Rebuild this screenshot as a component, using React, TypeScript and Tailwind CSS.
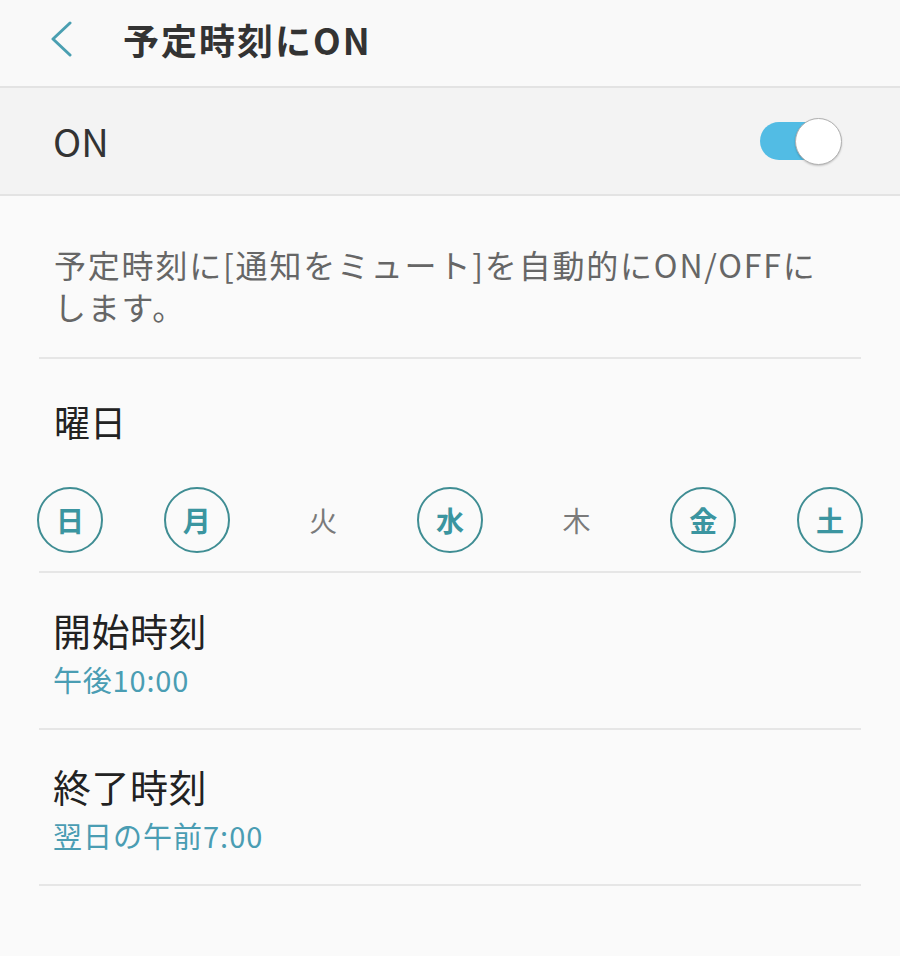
import React from "react";

const font = { fontFamily: '"Noto Sans CJK JP", "Noto Sans", sans-serif' };

const days = [
  { c: "日", on: true },
  { c: "月", on: true },
  { c: "火", on: false },
  { c: "水", on: true },
  { c: "木", on: false },
  { c: "金", on: true },
  { c: "土", on: true },
];

export default function App() {
  return (
    <div className="w-[900px] h-[956px] bg-[#fafafa] overflow-hidden" style={font}>
      {/* Header */}
      <div className="h-[88px] flex items-center bg-[#f9f9f9] border-b-[2px] border-[#e3e3e3]">
        <div className="w-[123px] flex items-center pl-[49px] -mt-[8px]">
          <svg width="24" height="36" viewBox="0 0 24 36" fill="none">
            <path d="M21 2 L4 18 L21 34" stroke="#4a9fb1" strokeWidth="3" strokeLinecap="round" strokeLinejoin="round" />
          </svg>
        </div>
        <div className="text-[36px] leading-[44px] font-bold text-[#333333] tracking-[2px] -mt-[8px]">予定時刻にON</div>
      </div>

      {/* ON row */}
      <div className="h-[108px] flex items-center justify-between bg-[#f3f3f3] border-b-[2px] border-[#e3e3e3] pl-[53px] pr-[58px]">
        <div className="text-[38px] leading-[44px] text-[#333333]">ON</div>
        <div className="relative w-[82px] h-[48px] flex items-center">
          <div className="absolute left-0 w-[64px] h-[38px] rounded-full bg-[#52bce4]" />
          <div className="absolute right-0 w-[47px] h-[47px] rounded-full bg-white border border-[#b0b0b0] shadow-[0_1px_2px_rgba(0,0,0,0.2)]" />
        </div>
      </div>

      {/* Description */}
      <div className="px-[39px]">
        <div className="pt-[47px] pb-[30px] px-[15px] text-[32px] leading-[42px] text-[#666666] tracking-[1.8px]">
          予定時刻に[通知をミュート]を自動的にON/OFFに
          <br />
          します。
        </div>
        <div className="h-[2px] bg-[#e6e6e6]" />
      </div>

      {/* Weekdays */}
      <div className="pt-[40px] px-[54px] text-[36px] leading-[44px] text-[#222222]">曜日</div>
      <div className="mt-[44px] px-[37px] flex justify-between">
        {days.map((d) =>
          d.on ? (
            <div
              key={d.c}
              className="w-[66px] h-[66px] rounded-full border-[2px] border-[#3f8d93] flex items-center justify-center text-[28px] font-bold text-[#3b95a0]"
            >
              {d.c}
            </div>
          ) : (
            <div key={d.c} className="w-[66px] h-[66px] flex items-center justify-center text-[28px] text-[#7a7a7a]">
              {d.c}
            </div>
          )
        )}
      </div>
      <div className="px-[39px] mt-[18px]">
        <div className="h-[2px] bg-[#e6e6e6]" />
      </div>

      {/* Start time */}
      <div className="px-[39px]">
        <div className="px-[14px] pt-[34px] pb-[32px]">
          <div className="text-[38px] leading-[46px] text-[#222222] tracking-[0.5px]">開始時刻</div>
          <div className="mt-[9px] text-[29px] leading-[34px] text-[#4a9db3] tracking-[0.8px]">午後10:00</div>
        </div>
        <div className="h-[2px] bg-[#e6e6e6]" />
      </div>

      {/* End time */}
      <div className="px-[39px]">
        <div className="px-[14px] pt-[33px] pb-[32px]">
          <div className="text-[38px] leading-[46px] text-[#222222] tracking-[0.5px]">終了時刻</div>
          <div className="mt-[9px] text-[29px] leading-[34px] text-[#4a9db3] tracking-[1px]">翌日の午前7:00</div>
        </div>
        <div className="h-[2px] bg-[#e6e6e6]" />
      </div>
    </div>
  );
}
